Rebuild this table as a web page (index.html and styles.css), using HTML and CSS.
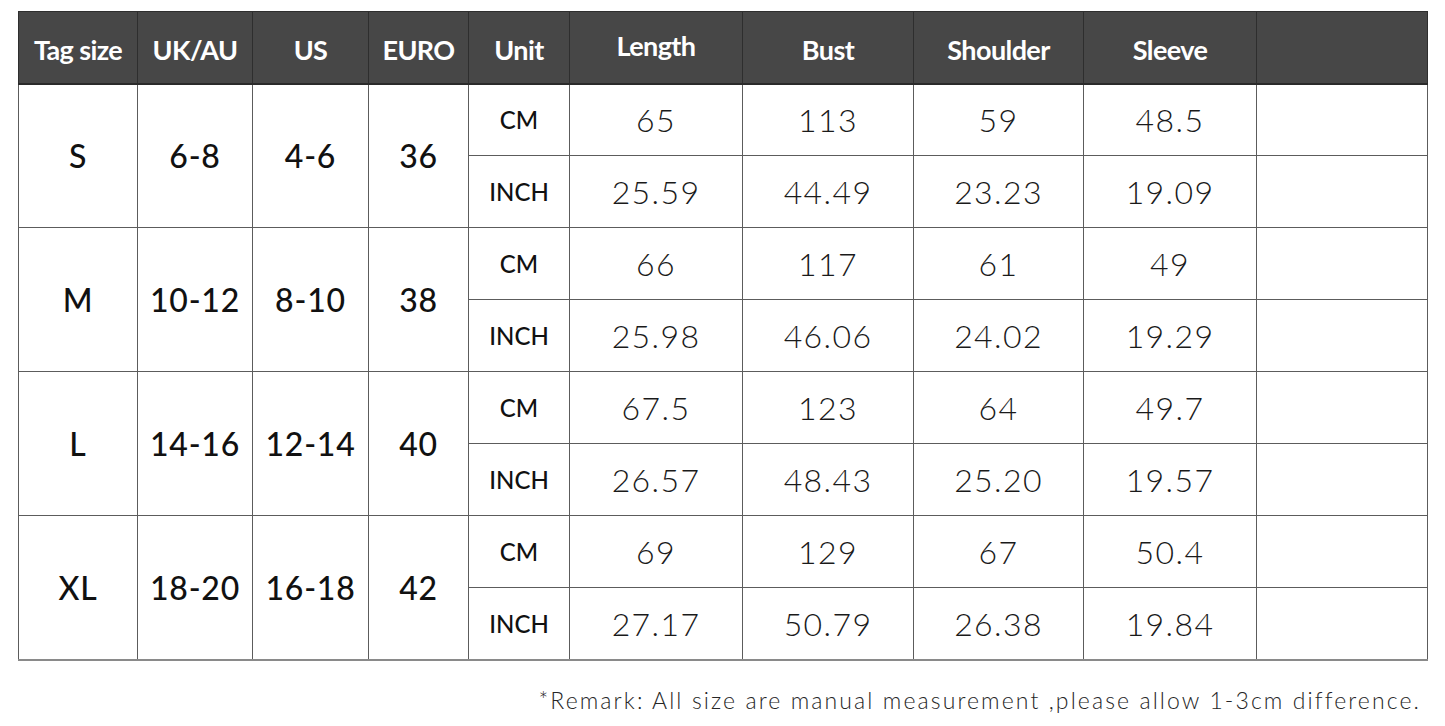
FILE: index.html
```html
<!DOCTYPE html>
<html>
<head>
<meta charset="utf-8">
<link rel="stylesheet" href="styles.css">
</head>
<body>
<div class="page">
<table class="chart">
  <colgroup>
    <col class="c-tag"><col class="c-uk"><col class="c-us"><col class="c-euro"><col class="c-unit">
    <col class="c-len"><col class="c-bust"><col class="c-sh"><col class="c-sl"><col class="c-ex">
  </colgroup>
  <thead>
    <tr>
      <th>Tag size</th><th>UK/AU</th><th>US</th><th>EURO</th><th>Unit</th>
      <th class="raised">Length</th><th>Bust</th><th>Shoulder</th><th>Sleeve</th><th></th>
    </tr>
  </thead>
  <tbody>
    <tr>
      <td rowspan="2" class="sz">S</td><td rowspan="2" class="sz">6-8</td><td rowspan="2" class="sz">4-6</td><td rowspan="2" class="sz">36</td>
      <td class="unit">CM</td><td class="num">65</td><td class="num">113</td><td class="num">59</td><td class="num">48.5</td><td></td>
    </tr>
    <tr>
      <td class="unit">INCH</td><td class="num">25.59</td><td class="num">44.49</td><td class="num">23.23</td><td class="num">19.09</td><td></td>
    </tr>
    <tr>
      <td rowspan="2" class="sz">M</td><td rowspan="2" class="sz">10-12</td><td rowspan="2" class="sz">8-10</td><td rowspan="2" class="sz">38</td>
      <td class="unit">CM</td><td class="num">66</td><td class="num">117</td><td class="num">61</td><td class="num">49</td><td></td>
    </tr>
    <tr>
      <td class="unit">INCH</td><td class="num">25.98</td><td class="num">46.06</td><td class="num">24.02</td><td class="num">19.29</td><td></td>
    </tr>
    <tr>
      <td rowspan="2" class="sz">L</td><td rowspan="2" class="sz">14-16</td><td rowspan="2" class="sz">12-14</td><td rowspan="2" class="sz">40</td>
      <td class="unit">CM</td><td class="num">67.5</td><td class="num">123</td><td class="num">64</td><td class="num">49.7</td><td></td>
    </tr>
    <tr>
      <td class="unit">INCH</td><td class="num">26.57</td><td class="num">48.43</td><td class="num">25.20</td><td class="num">19.57</td><td></td>
    </tr>
    <tr>
      <td rowspan="2" class="sz">XL</td><td rowspan="2" class="sz">18-20</td><td rowspan="2" class="sz">16-18</td><td rowspan="2" class="sz">42</td>
      <td class="unit">CM</td><td class="num">69</td><td class="num">129</td><td class="num">67</td><td class="num">50.4</td><td></td>
    </tr>
    <tr class="last">
      <td class="unit">INCH</td><td class="num">27.17</td><td class="num">50.79</td><td class="num">26.38</td><td class="num">19.84</td><td></td>
    </tr>
  </tbody>
</table>
<p class="remark">*Remark: All size are manual measurement ,please allow 1-3cm difference.</p>
</div>
</body>
</html>
```
FILE: styles.css
```css
html, body {
  margin: 0;
  padding: 0;
  background: #ffffff;
}
.page {
  width: 1445px;
  height: 726px;
  padding: 11px 0 0 18px;
  box-sizing: border-box;
  font-family: "Lato", "Open Sans", sans-serif;
  color: #1a1a1a;
}
.chart {
  border-collapse: collapse;
  table-layout: fixed;
  width: 1409px;
}
.c-tag { width: 119px; }
.c-uk { width: 115px; }
.c-us { width: 116px; }
.c-euro { width: 100px; }
.c-unit { width: 101px; }
.c-len { width: 173px; }
.c-bust { width: 171px; }
.c-sh { width: 170px; }
.c-sl { width: 173px; }
.c-ex { width: 171px; }

.chart th {
  background: #474747;
  color: #ffffff;
  height: 72px;
  padding: 5px 0 0 0;
  box-sizing: border-box;
  font-size: 27px;
  font-weight: 700;
  letter-spacing: -0.6px;
  border: 1px solid #2e2e2e;
  border-bottom: 2px solid #2a2a2a;
  text-align: center;
  vertical-align: middle;
}
.chart th.raised {
  padding: 0 0 4px 0;
}
.chart td {
  height: 72px;
  padding: 0;
  box-sizing: border-box;
  border: 1px solid #5c5c5c;
  text-align: center;
  vertical-align: middle;
}
.chart tr.last td,
.chart tbody tr:nth-last-child(2) td.sz {
  border-bottom: 2px solid #8a8a8a;
}
.sz {
  font-size: 32px;
  font-weight: 500;
  letter-spacing: 0.8px;
  color: #111;
}
.unit {
  font-size: 24px;
  font-weight: 500;
  color: #111;
  letter-spacing: 0;
}
.num {
  font-size: 32px;
  font-weight: 300;
  letter-spacing: 1.4px;
  color: #1a1a1a;
}
.remark {
  margin: 25px 0 0 0;
  width: 1403px;
  text-align: right;
  font-size: 23px;
  font-weight: 300;
  letter-spacing: 2.1px;
  color: #262626;
}
```
